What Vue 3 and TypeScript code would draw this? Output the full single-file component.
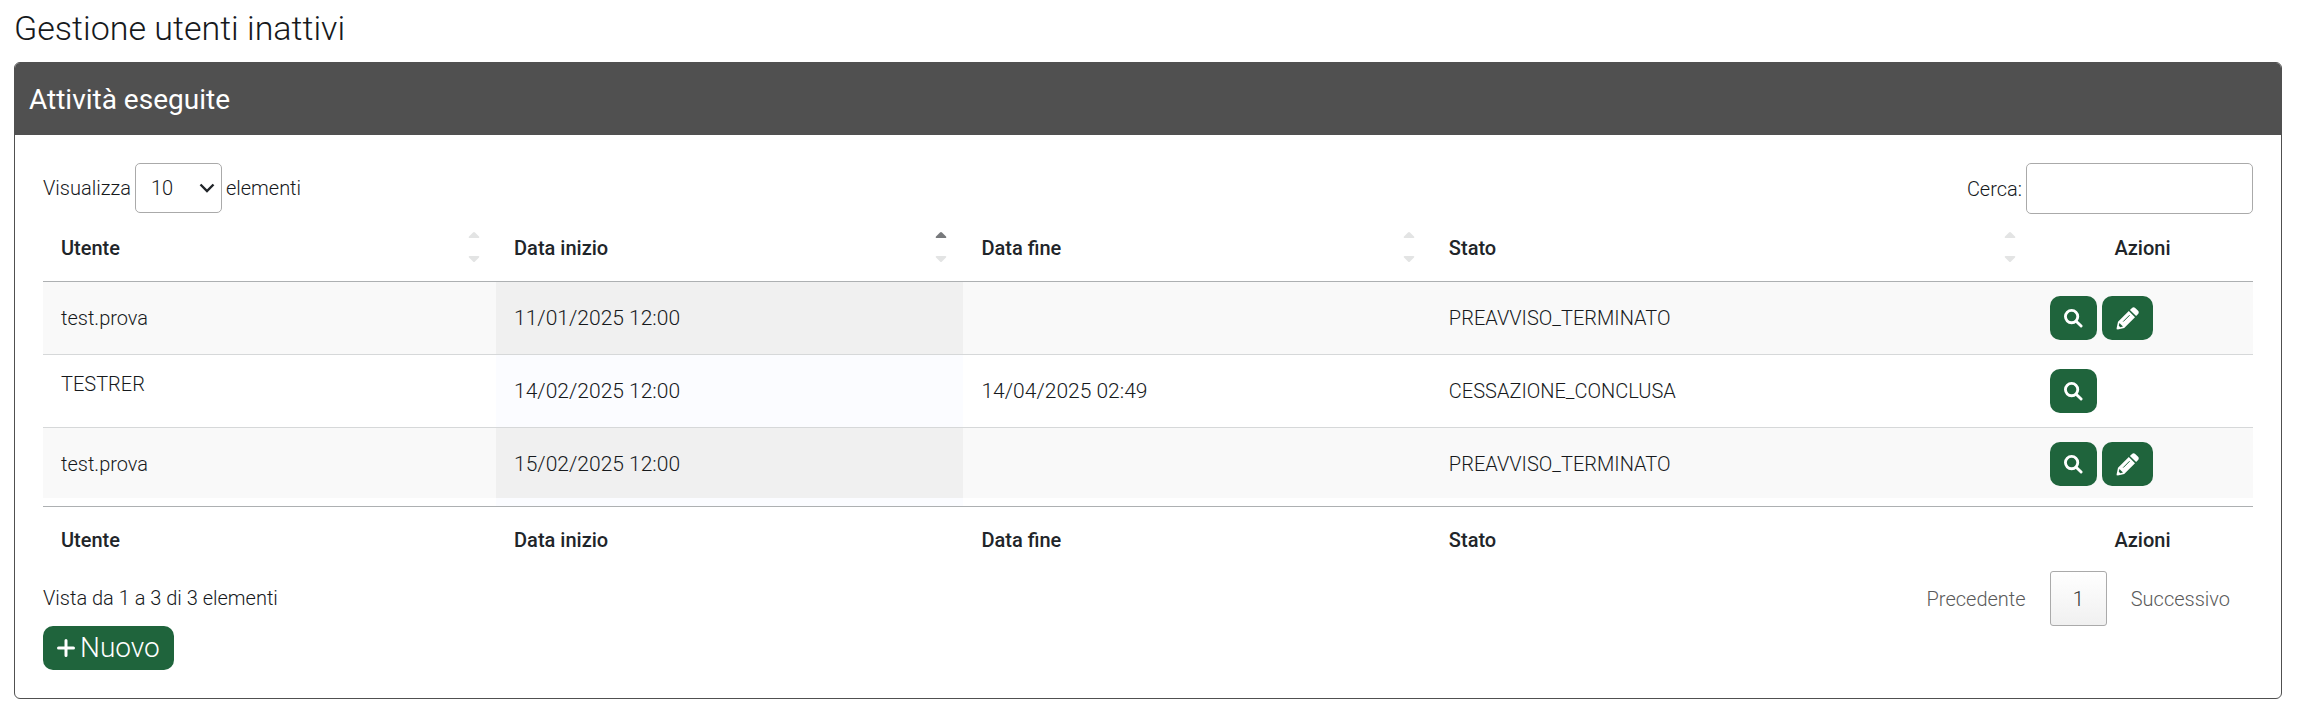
<script setup lang="ts">
import { ref } from 'vue'

interface Column {
  key: string
  label: string
  sortable: boolean
}

interface Activity {
  id: number
  user: string
  start: string
  end: string
  status: string
  editable: boolean
  topAligned?: boolean
}

const columns: Column[] = [
  { key: 'user', label: 'Utente', sortable: true },
  { key: 'start', label: 'Data inizio', sortable: true },
  { key: 'end', label: 'Data fine', sortable: true },
  { key: 'status', label: 'Stato', sortable: true },
  { key: 'actions', label: 'Azioni', sortable: false },
]

const activities: Activity[] = [
  { id: 1, user: 'test.prova', start: '11/01/2025 12:00', end: '', status: 'PREAVVISO_TERMINATO', editable: true },
  { id: 2, user: 'TESTRER', start: '14/02/2025 12:00', end: '14/04/2025 02:49', status: 'CESSAZIONE_CONCLUSA', editable: false, topAligned: true },
  { id: 3, user: 'test.prova', start: '15/02/2025 12:00', end: '', status: 'PREAVVISO_TERMINATO', editable: true },
]

const sortedBy = 'start'
const pageSize = ref('10')
const search = ref('')
</script>

<template>
  <main class="page">
    <h1 class="page-title">Gestione utenti inattivi</h1>

    <section class="card">
      <h2 class="card-header">Attività eseguite</h2>

      <div class="card-body">
        <div class="toolbar">
          <label class="field">
            <span>Visualizza</span>
            <span class="select-wrap">
              <select v-model="pageSize" class="control select">
                <option>10</option>
                <option>25</option>
                <option>50</option>
              </select>
              <svg class="chevron" viewBox="0 0 16 10" aria-hidden="true">
                <path d="M1.5 1.5 8 8l6.500-6.500" />
              </svg>
            </span>
            <span>elementi</span>
          </label>
          <label class="field">
            <span>Cerca:</span>
            <input v-model="search" type="search" class="control search" />
          </label>
        </div>

        <table class="table">
          <colgroup>
            <col v-for="c in columns" :key="c.key" :class="'col-' + c.key" />
          </colgroup>
          <thead>
            <tr>
              <th v-for="c in columns" :key="c.key" scope="col" :class="{ centered: !c.sortable }">
                <div v-if="c.sortable" class="head">
                  <span>{{ c.label }}</span>
                  <svg class="sort" viewBox="0 0 12 34" aria-hidden="true">
                    <path
                      :class="{ on: c.key === sortedBy }"
                      d="M5 1.400a1.400 1.400 0 0 1 2 0l4 4c.6.7.3 1.600-.6 1.600H1.600C.7 7 .4 6.100 1 5.400z"
                    />
                    <path d="M5 30.600a1.400 1.400 0 0 0 2 0l4-4c.6-.7.3-1.600-.6-1.600H1.600c-.9 0-1.200.9-.6 1.600z" />
                  </svg>
                </div>
                <template v-else>{{ c.label }}</template>
              </th>
            </tr>
          </thead>
          <tbody>
            <tr v-for="a in activities" :key="a.id">
              <td :class="{ top: a.topAligned }">{{ a.user }}</td>
              <td class="date">{{ a.start }}</td>
              <td class="date">{{ a.end }}</td>
              <td>{{ a.status }}</td>
              <td>
                <div class="actions">
                  <button type="button" class="btn" aria-label="Visualizza">
                    <svg class="icon-search" viewBox="0 0 20 20" aria-hidden="true">
                      <circle cx="8" cy="8" r="6.500" />
                      <path d="m12.800 12.800 5.200 5.200" />
                    </svg>
                  </button>
                  <button v-if="a.editable" type="button" class="btn" aria-label="Modifica">
                    <svg class="icon-pencil" viewBox="0 0 23 23" aria-hidden="true">
                      <path
                        class="fill"
                        d="M.6 21.200 2 14.800 12.800 4l6.200 6.200L8.200 21 1.800 22.400c-.8.1-1.300-.4-1.200-1.200zM13.900 2.900 16 .9c1-.9 2.200-.9 3.200 0L22.100 3.800c.9 1 .9 2.200 0 3.200l-2 2.100z"
                      />
                      <path class="detail" d="M7.200 14.600 13.600 8.200" />
                      <path class="notch" d="m3.400 16 3.600 3.500-2.700.7-1.500-1.500z" />
                    </svg>
                  </button>
                </div>
              </td>
            </tr>
            <tr class="spacer" aria-hidden="true">
              <td v-for="c in columns" :key="c.key"></td>
            </tr>
          </tbody>
          <tfoot>
            <tr>
              <th v-for="c in columns" :key="c.key" scope="col" :class="{ centered: !c.sortable }">{{ c.label }}</th>
            </tr>
          </tfoot>
        </table>

        <div class="footer">
          <div class="summary">
            <p class="info">Vista da 1 a 3 di 3 elementi</p>
            <button type="button" class="btn btn-new">
              <svg class="icon-plus" viewBox="0 0 18 18" aria-hidden="true"><path d="M9 1.500v15M1.500 9h15" /></svg>
              Nuovo
            </button>
          </div>
          <nav class="pagination" aria-label="Paginazione">
            <button type="button" class="page-link">Precedente</button>
            <button type="button" class="page-link current" aria-current="page">1</button>
            <button type="button" class="page-link">Successivo</button>
          </nav>
        </div>
      </div>
    </section>
  </main>
</template>

<style>
body {
  margin: 0;
  background: #fff;
}
</style>

<style scoped>
.page {
  padding: 8px 21px 17px 14px;
  color: #16191c;
  font: 300 20px/30px Roboto, 'Liberation Sans', sans-serif;
}
.page-title {
  margin: 0 0 14px;
  font-size: 34px;
  font-weight: 300;
  line-height: 40px;
}
.card {
  border: 1px solid #505050;
  border-radius: 6px;
  overflow: hidden;
}
.card-header {
  margin: 0;
  padding: 19px 14px 17px;
  background: #505050;
  color: #fff;
  font-size: 28px;
  font-weight: 400;
  line-height: 36px;
}
.card-body {
  padding: 28px;
}
.toolbar {
  display: flex;
  justify-content: space-between;
  align-items: flex-start;
  padding-bottom: 1px;
}
.field {
  display: flex;
  align-items: center;
  gap: 4px;
}
.control {
  box-sizing: border-box;
  height: 50px;
  border: 1px solid #aaa;
  border-radius: 5px;
  background: transparent;
  color: inherit;
  font: inherit;
}
.select-wrap {
  display: grid;
  align-items: center;
}
.select-wrap > * {
  grid-area: 1 / 1;
}
.select {
  width: 87px;
  padding: 0 30px 0 15px;
  appearance: none;
}
.chevron {
  justify-self: end;
  width: 16px;
  height: 10px;
  margin-right: 7px;
  pointer-events: none;
  fill: none;
  stroke: #212529;
  stroke-width: 2.400;
}
.search {
  width: 227px;
  height: 51px;
  padding: 0 8px;
}
.table {
  width: 100%;
  table-layout: fixed;
  border-collapse: separate;
  border-spacing: 0;
}
.col-user {
  width: 20.500%;
}
.col-start,
.col-end {
  width: 21.150%;
}
.col-status {
  width: 27.200%;
}
.col-actions {
  width: 10%;
}
.table th {
  padding: 18px;
  text-align: left;
  font-weight: 500;
  color: #212529;
}
.table thead th {
  padding-right: 16px;
  border-bottom: 1px solid #adb0b2;
}
.table tfoot th {
  padding-bottom: 16px;
  border-top: 1px solid #adb0b2;
}
.table th.centered {
  padding-right: 18px;
  text-align: center;
}
.head {
  display: flex;
  justify-content: space-between;
  align-items: center;
  height: 30px;
}
.sort {
  width: 12px;
  height: 34px;
  fill: #e3e4e4;
}
.sort .on {
  fill: #77797c;
}
.table td {
  padding: 14px 18px;
  vertical-align: middle;
  background: #fff;
}
.table td.top {
  vertical-align: top;
}
.table td.date {
  font-size: 21px;
}
.table tbody tr + tr:not(.spacer) td {
  border-top: 1px solid #d6d8d9;
}
.table tbody tr:nth-child(odd) td {
  background: #f9f9f9;
}
.table td:nth-child(2) {
  background: #fbfcff;
}
.table tbody tr:nth-child(odd) td:nth-child(2) {
  background: #f0f0f0;
}
.table tbody tr:nth-last-child(2) td {
  padding-bottom: 12px;
}
.table .spacer td {
  height: 8px;
  padding: 0;
}
.actions {
  display: flex;
  gap: 5px;
}
.btn {
  display: inline-flex;
  align-items: center;
  justify-content: center;
  height: 44px;
  padding: 0 14px;
  border: 0;
  border-radius: 10px;
  background: #1f643c;
  color: #fff;
  font: inherit;
  cursor: pointer;
}
.icon-search {
  width: 19px;
  height: 19px;
  fill: none;
  stroke: #fff;
  stroke-width: 3;
  stroke-linecap: round;
}
.icon-pencil {
  width: 23px;
  height: 23px;
}
.fill {
  fill: #fff;
}
.detail {
  fill: none;
  stroke: #1f643c;
  stroke-width: 1;
}
.notch {
  fill: #1f643c;
}
.footer {
  display: flex;
  justify-content: space-between;
  align-items: flex-start;
}
.info {
  margin: 12px 0 13px;
}
.btn-new {
  gap: 5px;
  padding: 0 14px;
  font-size: 28px;
  font-weight: 300;
}
.icon-plus {
  width: 18px;
  height: 18px;
  fill: none;
  stroke: #fff;
  stroke-width: 3;
  stroke-linecap: round;
}
.pagination {
  display: flex;
  gap: 1px;
}
.page-link {
  height: 55px;
  padding: 0 22px;
  border: 1px solid transparent;
  border-radius: 3px;
  background: transparent;
  color: #5a5a5a;
  font: inherit;
  cursor: pointer;
}
.current {
  border-color: #aaa;
  background: linear-gradient(#fff, #f0f0f0);
  color: #333;
}
</style>
